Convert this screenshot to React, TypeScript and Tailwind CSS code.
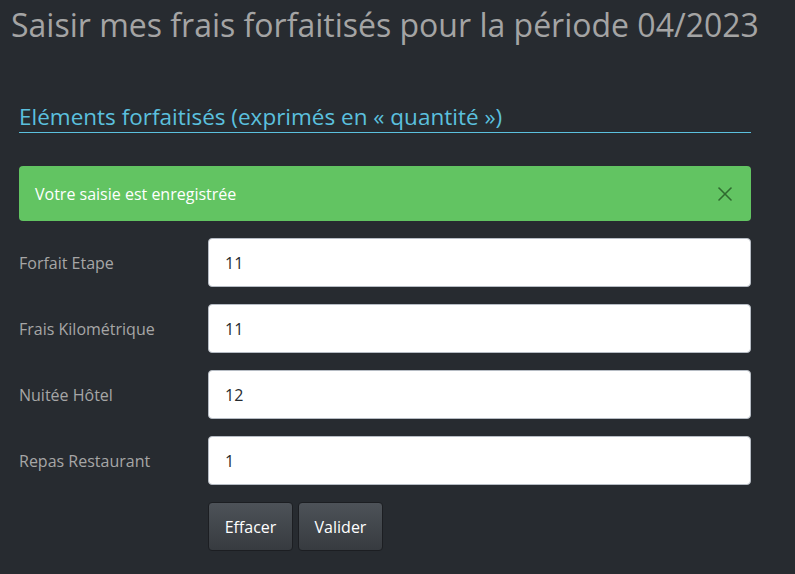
import { X } from 'lucide-react';

const rows = [
  { label: 'Forfait Etape', value: '11' },
  { label: 'Frais Kilométrique', value: '11' },
  { label: 'Nuitée Hôtel', value: '12' },
  { label: 'Repas Restaurant', value: '1' },
];

export default function App() {
  return (
    <div
      className="min-h-screen bg-[#272b30] text-[#aaaaaa]"
      style={{ fontFamily: '"Open Sans", sans-serif' }}
    >
      <h1 className="pl-[11px] pt-[3px] text-[32px] leading-[44px] text-[#a4a4a4]">
        Saisir mes frais forfaitisés pour la période 04/2023
      </h1>

      <div className="w-[732px] ml-[19px] mt-[55px]">
        <h2 className="text-[22.5px] leading-[30px] text-[#5bc0de] border-b border-[#5bc0de]">
          Eléments forfaitisés (exprimés en « quantité »)
        </h2>

        {/* alert */}
        <div className="mt-[33px] h-[55px] rounded-[4px] bg-[#62c462] flex items-center justify-between pl-4 pr-[14px]">
          <span className="text-[16px] text-white">Votre saisie est enregistrée</span>
          <X className="text-[#2f6b2f]" size={24} strokeWidth={1.6} />
        </div>

        <div className="mt-[17px] flex flex-col gap-[17px]">
          {rows.map((row) => (
            <div key={row.label} className="flex items-center">
              <label className="w-[189px] text-[16px] text-[#a6a6a6]">{row.label}</label>
              <input
                defaultValue={row.value}
                className="flex-1 h-[49px] rounded-[4px] bg-white border border-[#b6bcc4] px-4 text-[16px] text-[#272b30] outline-none"
              />
            </div>
          ))}
        </div>

        <div className="mt-[17px] ml-[189px] flex gap-[5px]">
          <button className="w-[85px] h-[49px] rounded-[4px] border border-[#1c1e22] bg-gradient-to-b from-[#4d5258] to-[#373b40] text-white text-[16px]">
            Effacer
          </button>
          <button className="w-[85px] h-[49px] rounded-[4px] border border-[#1c1e22] bg-gradient-to-b from-[#4d5258] to-[#373b40] text-white text-[16px]">
            Valider
          </button>
        </div>
      </div>
    </div>
  );
}
